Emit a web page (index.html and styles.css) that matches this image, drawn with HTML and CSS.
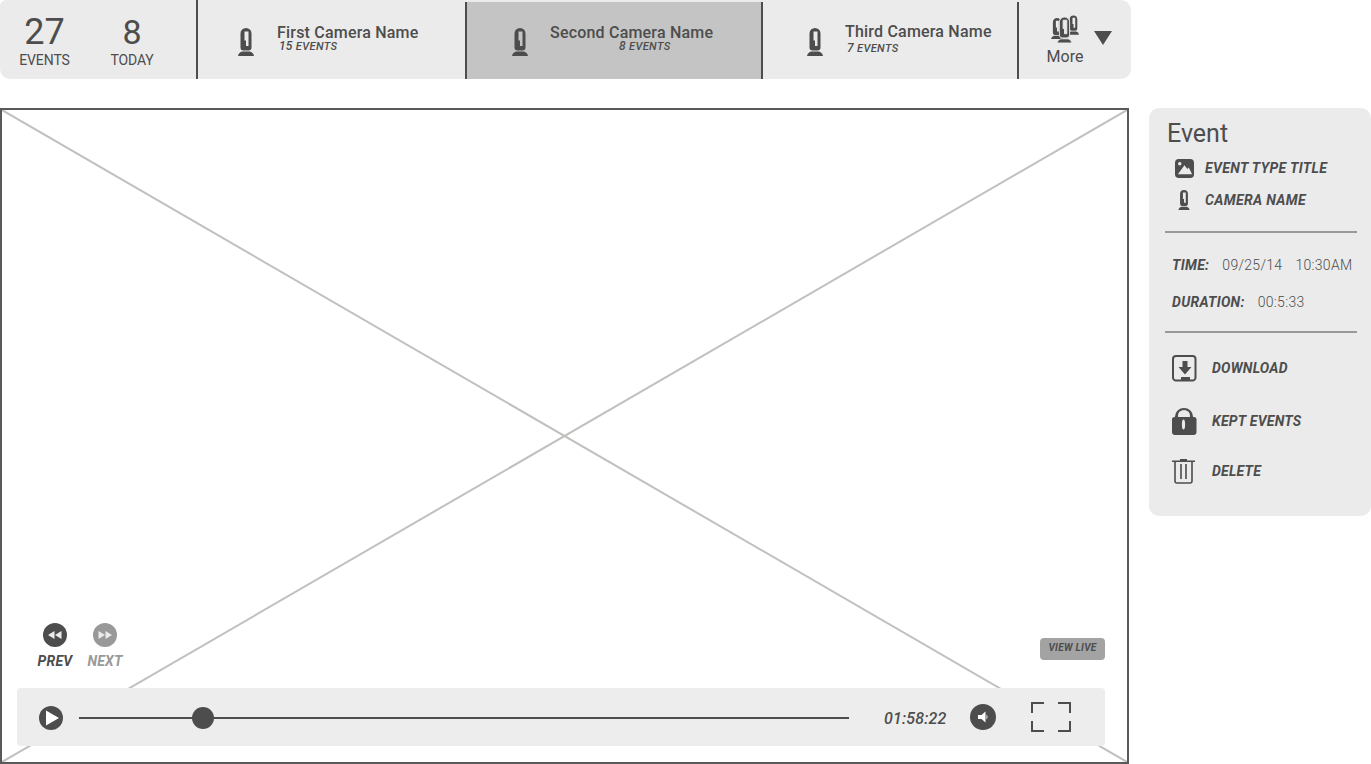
FILE: index.html
```html
<!DOCTYPE html>
<html lang="en">
<head>
    <meta charset="UTF-8">
    <meta name="viewport" content="width=device-width, initial-scale=1.0">
    <title>Events</title>
    <link rel="stylesheet" href="styles.css">
</head>
<body>
    <svg class="icon-defs" width="0" height="0">
        <symbol id="camera" viewBox="0 0 16 28">
            <path fill-rule="evenodd" d="M2.500 5.500a5.500 5.500 0 0 1 11 0v14a3 3 0 0 1-3 3h-5a3 3 0 0 1-3-3zM6.500 3.500v9h1.500v5.500h2.500V3.500z"/>
            <path d="M4 23.500h8q3.500 1 4 4.500H0q.5-3.500 4-4.500z"/>
        </symbol>
    </svg>

    <div class="top-bar">
        <div class="totals">
            <div class="total total-events">
                <div class="total-num">27</div>
                <div class="total-label">EVENTS</div>
            </div>
            <div class="total total-today">
                <div class="total-num">8</div>
                <div class="total-label">TODAY</div>
            </div>
        </div>
        <div class="cam-tab cam-first">
            <svg class="cam-icon"><use href="#camera"/></svg>
            <div class="cam-text">
                <div class="cam-name">First Camera Name</div>
                <div class="cam-count">15 <span>EVENTS</span></div>
            </div>
        </div>
        <div class="cam-tab cam-second">
            <svg class="cam-icon"><use href="#camera"/></svg>
            <div class="cam-text">
                <div class="cam-name">Second Camera Name</div>
                <div class="cam-count">8 <span>EVENTS</span></div>
            </div>
        </div>
        <div class="cam-tab cam-third">
            <svg class="cam-icon"><use href="#camera"/></svg>
            <div class="cam-text">
                <div class="cam-name">Third Camera Name</div>
                <div class="cam-count">7 <span>EVENTS</span></div>
            </div>
        </div>
        <div class="more">
            <div class="more-main">
                <svg class="more-icon" viewBox="0 0 32 28">
                    <use href="#camera" x="19" y="0" width="11" height="20"/>
                    <use href="#camera" x="2" y="3" width="12" height="21"/>
                    <use href="#camera" x="8" y="2" width="15" height="26" stroke="#ebebeb" stroke-width="1"/>
                </svg>
                <div class="more-label">More</div>
            </div>
            <div class="more-arrow"></div>
        </div>
    </div>

    <div class="main">
        <div class="player">
            <svg class="placeholder" viewBox="0 0 1125 654" preserveAspectRatio="none">
                <line x1="0" y1="0" x2="1125" y2="654"/>
                <line x1="1125" y1="0" x2="0" y2="654"/>
            </svg>
            <div class="skip">
                <div class="skip-btn">
                    <svg class="skip-icon" viewBox="0 0 24 24">
                        <circle cx="12" cy="12" r="12" fill="#4d4d4d"/>
                        <path d="M11.500 8v8L5 12zM18.500 8v8L12 12z" fill="#ebebeb"/>
                    </svg>
                    <span>PREV</span>
                </div>
                <div class="skip-btn skip-next">
                    <svg class="skip-icon" viewBox="0 0 24 24">
                        <circle cx="12" cy="12" r="12" fill="#999"/>
                        <path d="M5.500 8v8l6.500-4zM12.500 8v8l6.500-4z" fill="#ebebeb"/>
                    </svg>
                    <span>NEXT</span>
                </div>
            </div>
            <div class="view-live">VIEW LIVE</div>
            <div class="controls">
                <svg class="play-icon" viewBox="0 0 24 24">
                    <circle cx="12" cy="12" r="12" fill="#4d4d4d"/>
                    <path d="M7 4.500 20 12 7 19.500z" fill="#fff"/>
                </svg>
                <div class="track"><div class="thumb"></div></div>
                <div class="time">01:58:22</div>
                <svg class="volume-icon" viewBox="0 0 26 26">
                    <circle cx="13" cy="13" r="13" fill="#4d4d4d"/>
                    <path d="M8 11h3.500L15.500 7.500v11L11.500 15H8z" fill="#fff"/>
                    <path d="M16.500 10.500q2 2.500 0 5z" fill="#fff"/>
                </svg>
                <svg class="full-icon" viewBox="0 0 40 30">
                    <path d="M1 11V1h12M27 1h12v10M39 19v10H27M13 29H1V19" fill="none" stroke="#4d4d4d" stroke-width="2"/>
                </svg>
            </div>
        </div>

        <div class="side">
            <h2>Event</h2>
            <div class="meta-row meta-type">
                <svg class="meta-icon" viewBox="0 0 20 20">
                    <rect width="20" height="20" rx="4" fill="#4d4d4d"/>
                    <circle cx="5" cy="5" r="1.800" fill="#ebebeb"/>
                    <path d="M3 16 10 6.500l3 4 1.500-1.500L18 16z" fill="#ebebeb"/>
                </svg>
                <span>EVENT TYPE TITLE</span>
            </div>
            <div class="meta-row meta-cam">
                <svg class="meta-icon meta-cam-icon"><use href="#camera"/></svg>
                <span>CAMERA NAME</span>
            </div>
            <hr class="rule rule-first">
            <div class="info info-time"><b>TIME:</b><span>09/25/14</span><span>10:30AM</span></div>
            <div class="info info-duration"><b>DURATION:</b><span>00:5:33</span></div>
            <hr class="rule rule-second">
            <div class="action action-download">
                <svg class="action-icon" viewBox="0 0 26 28">
                    <path d="M5 2h16.500a3 3 0 0 1 3 3v18.500a3 3 0 0 1-3 3H5a3 3 0 0 1-3-3V5a3 3 0 0 1 3-3z" fill="none" stroke="#4d4d4d" stroke-width="2"/>
                    <path d="M11.500 7h5v6h4L14 20.500 7.500 13h4zM10 23h9v3.500h-9z" fill="#4d4d4d"/>
                </svg>
                <span>DOWNLOAD</span>
            </div>
            <div class="action action-kept">
                <svg class="action-icon" viewBox="0 0 26 28">
                    <path fill-rule="evenodd" d="M4 10V9.500a9 8.500 0 0 1 18 0v.5h1a2.500 2.500 0 0 1 2.500 2.500V25a3 3 0 0 1-3 3H4a3 3 0 0 1-3-3V12.500A2.500 2.500 0 0 1 3.500 10zM7 10h12V8.500a6 5.500 0 0 0-12 0zM12.500 12.500a1.600 5 0 0 0 0 10 1.600 5 0 0 0 0-10z" fill="#4d4d4d"/>
                </svg>
                <span>KEPT EVENTS</span>
            </div>
            <div class="action action-delete">
                <svg class="action-icon" viewBox="0 0 26 28">
                    <path d="M4 5v19a2 2 0 0 0 2 2h13a2 2 0 0 0 2-2V5M10 7v15M15 7v15" fill="none" stroke="#4d4d4d" stroke-width="1.600"/>
                    <path d="M1 3.500h23v1.600H1zM9 2h7v2H9z" fill="#4d4d4d"/>
                </svg>
                <span>DELETE</span>
            </div>
        </div>
    </div>
</body>
</html>
```

FILE: styles.css
```css
:root {
    --dark: #4d4d4d;
    --panel: #ebebeb;
    --selected: #c4c4c4;
}

* {
    margin: 0;
    padding: 0;
    box-sizing: border-box;
}

body {
    font-family: 'Roboto', 'Liberation Sans', sans-serif;
    background: #fff;
    color: var(--dark);
    width: 1371px;
    height: 764px;
    overflow: hidden;
}

.icon-defs {
    position: absolute;
}

/* top bar */
.top-bar {
    display: flex;
    width: 1131px;
    height: 79px;
    background: var(--panel);
    border-radius: 6px 10px 10px 10px;
    margin-bottom: 29px;
}

.totals {
    display: flex;
    width: 198px;
    border-right: 2px solid var(--dark);
    text-align: center;
}

.total-events {
    width: 89px;
    padding-top: 14px;
}

.total-today {
    width: 86px;
    padding-top: 14px;
}

.total-num {
    font-size: 36px;
    line-height: 37px;
}

.total-today .total-num {
    font-size: 34px;
}

.total-label {
    font-size: 14px;
    line-height: 18px;
    letter-spacing: -0.1px;
}

.cam-tab {
    display: flex;
    align-items: flex-start;
    height: 77px;
    margin-top: 2px;
    border-right: 2px solid var(--dark);
}

.cam-first {
    width: 267px;
    padding-left: 40px;
    margin-top: 0;
    height: 79px;
    border-right: 0;
}

.cam-second {
    width: 298px;
    padding-left: 45px;
    background: var(--selected);
    border-left: 2px solid var(--dark);
}

.cam-third {
    width: 256px;
    padding-left: 44px;
}

.cam-icon {
    width: 16px;
    height: 28px;
    fill: var(--dark);
    margin-top: 26px;
}

.cam-first .cam-icon {
    margin-top: 28px;
}

.cam-text {
    margin-left: 23px;
    padding-top: 22px;
}

.cam-first .cam-text {
    padding-top: 24px;
}

.cam-second .cam-text {
    margin-left: 22px;
}

.cam-third .cam-text {
    margin-left: 22px;
    padding-top: 21px;
}

.cam-name {
    font-size: 16px;
    font-weight: 500;
    line-height: 17px;
    letter-spacing: 0.2px;
}

.cam-count {
    font-size: 12px;
    font-style: italic;
    font-weight: 500;
    line-height: 10px;
    padding-left: 2px;
    letter-spacing: 0.2px;
}

.cam-second .cam-count {
    padding-left: 69px;
}

.cam-third .cam-count {
    line-height: 16px;
    padding-left: 2px;
}

.cam-count span {
    font-size: 11px;
    letter-spacing: 0.4px;
}

.more {
    display: flex;
    flex: 1;
    height: 77px;
    margin-top: 2px;
}

.more-main {
    width: 92px;
    padding-top: 13px;
    text-align: center;
}

.more-icon {
    display: block;
    width: 32px;
    height: 28px;
    margin: 0 auto;
    fill: var(--dark);
}

.more-label {
    font-size: 16px;
    line-height: 20px;
    margin-top: 4px;
}

.more-arrow {
    width: 0;
    height: 0;
    margin: 29px 0 0 -17px;
    border-left: 9px solid transparent;
    border-right: 9px solid transparent;
    border-top: 14px solid var(--dark);
}

/* main area */
.main {
    display: flex;
    gap: 20px;
}

.player {
    position: relative;
    width: 1129px;
    height: 656px;
    border: 2px solid #595959;
}

.placeholder {
    display: block;
    width: 100%;
    height: 100%;
}

.placeholder line {
    stroke: #c2c0bf;
    stroke-width: 2;
    vector-effect: non-scaling-stroke;
}

.skip {
    position: absolute;
    left: 35px;
    top: 513px;
    display: flex;
    gap: 14px;
}

.skip-btn {
    display: flex;
    flex-direction: column;
    align-items: center;
    font-size: 14px;
    font-style: italic;
    font-weight: 700;
    width: 36px;
    letter-spacing: 0.2px;
}

.skip-next {
    color: #999;
}

.skip-icon {
    width: 24px;
    height: 24px;
    margin-bottom: 6px;
}

.view-live {
    position: absolute;
    left: 1038px;
    top: 528px;
    width: 65px;
    height: 22px;
    background: #a3a3a3;
    border-radius: 4px;
    font-size: 10px;
    font-style: italic;
    font-weight: 700;
    line-height: 20px;
    letter-spacing: 0.3px;
    text-align: center;
}

.controls {
    position: absolute;
    left: 15px;
    top: 578px;
    width: 1088px;
    height: 58px;
    padding-top: 2px;
    display: flex;
    align-items: center;
    background: #ededed;
    border-radius: 4px;
}

.play-icon {
    width: 24px;
    height: 24px;
    margin-left: 22px;
}

.track {
    position: relative;
    width: 770px;
    height: 2px;
    margin-left: 16px;
    background: var(--dark);
}

.thumb {
    position: absolute;
    left: 113px;
    top: -10px;
    width: 22px;
    height: 22px;
    border-radius: 50%;
    background: var(--dark);
}

.time {
    width: 66px;
    margin-left: 35px;
    font-size: 16px;
    font-style: italic;
    font-weight: 500;
    letter-spacing: 0.15px;
}

.volume-icon {
    width: 26px;
    height: 26px;
    margin-left: 20px;
    margin-top: -3px;
}

.full-icon {
    width: 40px;
    height: 30px;
    margin-left: 35px;
    margin-top: -3px;
}

/* event panel */
.side {
    position: relative;
    width: 222px;
    height: 408px;
    background: var(--panel);
    border-radius: 10px;
    padding-top: 12px;
}

.side h2 {
    font-size: 25px;
    font-weight: 400;
    line-height: 28px;
    margin-left: 18px;
}

.meta-row {
    display: flex;
    align-items: center;
    height: 20px;
    font-size: 14px;
    font-style: italic;
    font-weight: 700;
    letter-spacing: 0.35px;
}

.meta-type {
    margin-top: 10px;
}

.meta-cam {
    margin-top: 12px;
}

.meta-icon {
    width: 19px;
    height: 19px;
    margin-left: 26px;
    margin-right: 11px;
}

.meta-cam-icon {
    width: 12px;
    height: 20px;
    margin-left: 29px;
    margin-right: 15px;
    fill: var(--dark);
}

.rule {
    border: 0;
    height: 2px;
    background: #999;
    margin-left: 16px;
    width: 192px;
}

.rule-first {
    margin-top: 21px;
}

.rule-second {
    margin-top: 20px;
}

.info {
    font-size: 14px;
    font-weight: 300;
    line-height: 18px;
    margin-left: 23px;
    letter-spacing: 0.3px;
}

.info b {
    font-style: italic;
    font-weight: 700;
    margin-right: 13px;
}

.info span + span {
    margin-left: 13px;
}

.info-time {
    margin-top: 23px;
}

.info-duration {
    margin-top: 19px;
}

.action {
    display: flex;
    align-items: center;
    height: 28px;
    font-size: 14px;
    font-style: italic;
    font-weight: 700;
    letter-spacing: 0.25px;
    padding-left: 22px;
}

.action-icon {
    width: 26px;
    height: 28px;
    margin-right: 15px;
}

.action-download {
    margin-top: 21px;
}

.action-kept {
    margin-top: 25px;
}

.action-delete {
    margin-top: 22px;
}
```
